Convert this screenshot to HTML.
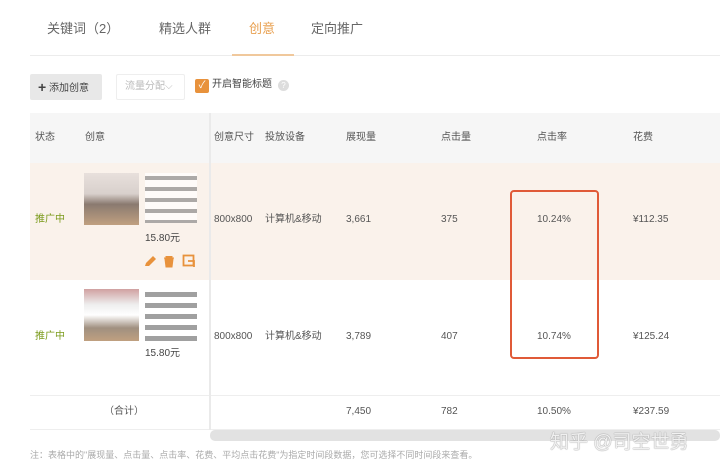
<!DOCTYPE html>
<html><head><meta charset="utf-8"><style>
*{margin:0;padding:0;box-sizing:border-box}
body{width:720px;height:469px;overflow:hidden;background:#fff;font-family:"Liberation Sans","Noto Sans CJK SC",sans-serif;color:#333;position:relative}
.a{position:absolute;white-space:nowrap}
.t{font-size:10px;color:#555;line-height:14px}
</style></head><body>
<div class="a" style="left:47px;top:18px;font-size:13px;color:#666">关键词（2）</div>
<div class="a" style="left:159px;top:18px;font-size:13px;color:#666">精选人群</div>
<div class="a" style="left:249px;top:18px;font-size:13px;color:#e8a050">创意</div>
<div class="a" style="left:311px;top:18px;font-size:13px;color:#666">定向推广</div>
<div class="a" style="left:30px;top:55px;width:690px;height:1px;background:#ececec"></div>
<div class="a" style="left:232px;top:54px;width:62px;height:2px;background:#f0c89c"></div>

<div class="a" style="left:30px;top:74px;width:72px;height:26px;background:#e8e8e8;border-radius:2px;font-size:10px;line-height:26px;padding-left:8px;color:#444"><b style="font-size:14px;vertical-align:-1px">+</b> 添加创意</div>
<div class="a" style="left:116px;top:74px;width:69px;height:26px;border:1px solid #eee;border-radius:2px;font-size:10px;line-height:24px;padding-left:8px;color:#bbb">流量分配⌵</div>
<div class="a" style="left:195px;top:79px;width:14px;height:14px;background:#e8923c;border-radius:2px;color:#fff;font-size:10px;line-height:14px;text-align:center">✓</div>
<div class="a t" style="left:212px;top:78px;color:#444">开启智能标题</div>
<div class="a" style="left:278px;top:80px;width:11px;height:11px;border-radius:50%;background:#ddd;color:#fff;font-size:8px;line-height:11px;text-align:center">?</div>

<div class="a" style="left:30px;top:113px;width:690px;height:50px;background:#f6f6f6"></div>
<div class="a" style="left:30px;top:163px;width:690px;height:117px;background:#faf2eb"></div>
<div class="a" style="left:30px;top:395px;width:690px;height:1px;background:#eee"></div>
<div class="a" style="left:30px;top:429px;width:690px;height:1px;background:#eee"></div>
<div class="a" style="left:209px;top:113px;width:2px;height:317px;background:#eaeaea"></div>
<div class="a" style="left:210px;top:430px;width:510px;height:11px;background:#e2e2e2;border-radius:5px"></div>

<div class="a t" style="left:35px;top:131px">状态</div>
<div class="a t" style="left:85px;top:131px">创意</div>
<div class="a t" style="left:214px;top:131px">创意尺寸</div>
<div class="a t" style="left:265px;top:131px">投放设备</div>
<div class="a t" style="left:346px;top:131px">展现量</div>
<div class="a t" style="left:441px;top:131px">点击量</div>
<div class="a t" style="left:537px;top:131px">点击率</div>
<div class="a t" style="left:633px;top:131px">花费</div>

<div class="a t" style="left:35px;top:213px;color:#7a9a1a">推广中</div>
<div class="a" style="left:84px;top:173px;width:55px;height:52px;background:linear-gradient(#e8e0dc 0,#d8d0cc 40%,#8a7a70 60%,#c0a080 100%)"></div>
<div class="a" style="left:145px;top:173px;width:52px;height:50px;background:repeating-linear-gradient(#fff 0 3px,#8a8a8a 3px 7px,#fff 7px 11px);opacity:.7"></div>
<div class="a t" style="left:145px;top:232px;color:#444">15.80元</div>
<svg class="a" style="left:144px;top:254px" width="54" height="14" viewBox="0 0 54 14">
<path d="M1 12 L2 9 L9 2 L12 5 L5 12 Z" fill="#e8923c"/>
<path d="M20 4h10M22 4v-1.5h6V4M21 5h8l-1 8h-6z" fill="#e8923c" stroke="#e8923c" stroke-width="1"/>
<rect x="39.5" y="1.5" width="10" height="10" fill="none" stroke="#e8923c" stroke-width="1.8"/>
<path d="M44 7h6v6" fill="none" stroke="#e8923c" stroke-width="1.8"/>
</svg>
<div class="a t" style="left:214px;top:213px">800x800</div>
<div class="a t" style="left:265px;top:213px">计算机&amp;移动</div>
<div class="a t" style="left:346px;top:213px">3,661</div>
<div class="a t" style="left:441px;top:213px">375</div>
<div class="a t" style="left:537px;top:213px">10.24%</div>
<div class="a t" style="left:633px;top:213px">¥112.35</div>

<div class="a t" style="left:35px;top:330px;color:#7a9a1a">推广中</div>
<div class="a" style="left:84px;top:289px;width:55px;height:52px;background:linear-gradient(#d0a0a0 0,#eee 30%,#fff 50%,#a09080 75%,#c0a080 100%)"></div>
<div class="a" style="left:145px;top:289px;width:52px;height:53px;background:repeating-linear-gradient(#fff 0 3px,#777 3px 8px,#fff 8px 11px);opacity:.7"></div>
<div class="a t" style="left:145px;top:347px;color:#444">15.80元</div>
<div class="a t" style="left:214px;top:330px">800x800</div>
<div class="a t" style="left:265px;top:330px">计算机&amp;移动</div>
<div class="a t" style="left:346px;top:330px">3,789</div>
<div class="a t" style="left:441px;top:330px">407</div>
<div class="a t" style="left:537px;top:330px">10.74%</div>
<div class="a t" style="left:633px;top:330px">¥125.24</div>

<div class="a" style="left:510px;top:190px;width:89px;height:169px;border:2px solid #e05a38;border-radius:4px"></div>

<div class="a t" style="left:104px;top:405px">（合计）</div>
<div class="a t" style="left:346px;top:405px">7,450</div>
<div class="a t" style="left:441px;top:405px">782</div>
<div class="a t" style="left:537px;top:405px">10.50%</div>
<div class="a t" style="left:633px;top:405px">¥237.59</div>

<div class="a" style="left:30px;top:448px;font-size:9px;color:#aaa">注：表格中的"展现量、点击量、点击率、花费、平均点击花费"为指定时间段数据，您可选择不同时间段来查看。</div>
<div class="a" style="left:550px;top:427px;font-size:19px;color:rgba(255,255,255,.85);text-shadow:0 0 1px #999,0 0 1px #999">知乎 @司空世勇</div>
</body></html>
